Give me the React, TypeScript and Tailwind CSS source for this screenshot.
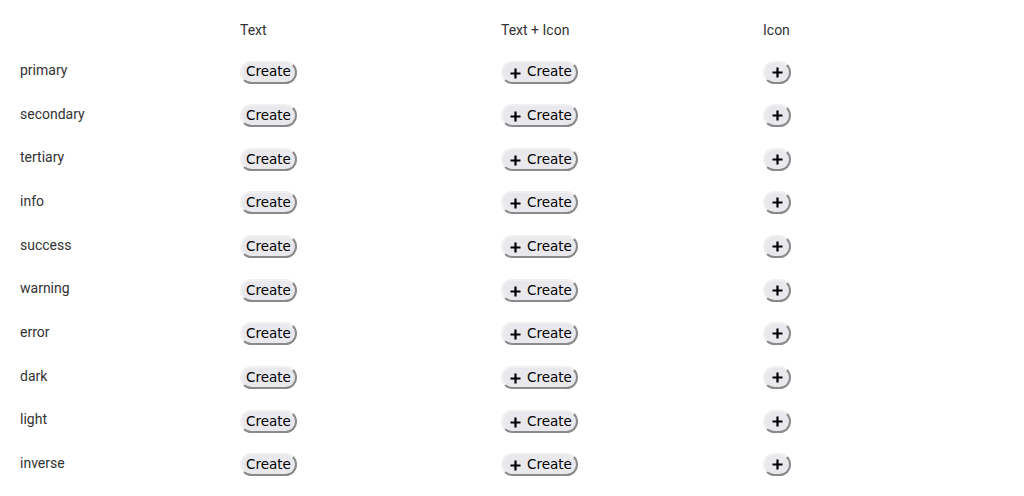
import React from "react";

const rows = ["primary","secondary","tertiary","info","success","warning","error","dark","light","inverse"];

const btn = "inline-flex items-center rounded-full bg-[#e9e9ed] border-2 [border-style:solid] border-t-[#f0f0f0] border-l-[#f0f0f0] border-b-[#8a8a8a] border-r-[#8a8a8a] h-[23px] text-[13.5px] leading-none text-black font-['DejaVu_Sans',sans-serif]";

function Plus() {
  return (
    <svg width="11" height="11" viewBox="0 0 11 11" className="block">
      <path d="M5.5 0.5V10.5M0.5 5.5H10.5" stroke="#000" strokeWidth="2.2" />
    </svg>
  );
}

export default function App() {
  return (
    <div className="w-[1024px] h-[496px] bg-white pt-5 px-5 font-['Roboto',sans-serif] text-[14px] text-[#333]">
      <div className="grid grid-cols-[220px_261px_262px_1fr] h-[30px]">
        <div />
        <div className="leading-5">Text</div>
        <div className="leading-5">Text + Icon</div>
        <div className="leading-5">Icon</div>
      </div>
      {rows.map((r) => (
        <div key={r} className="grid grid-cols-[220px_261px_262px_1fr] h-[43.67px] items-start">
          <div className="leading-5 mt-[10px]">{r}</div>
          <div className="mt-[10.5px]">
            <button className={btn + " px-[4px]"}>Create</button>
          </div>
          <div className="mt-[10.5px]">
            <button className={btn + " pl-[7px] pr-[4px] gap-[6px]"}>
              <span className="mt-[2px]"><Plus /></span>
              Create
            </button>
          </div>
          <div className="mt-[10.5px]">
            <button className={btn + " w-[28px] justify-center"}>
              <Plus />
            </button>
          </div>
        </div>
      ))}
    </div>
  );
}
